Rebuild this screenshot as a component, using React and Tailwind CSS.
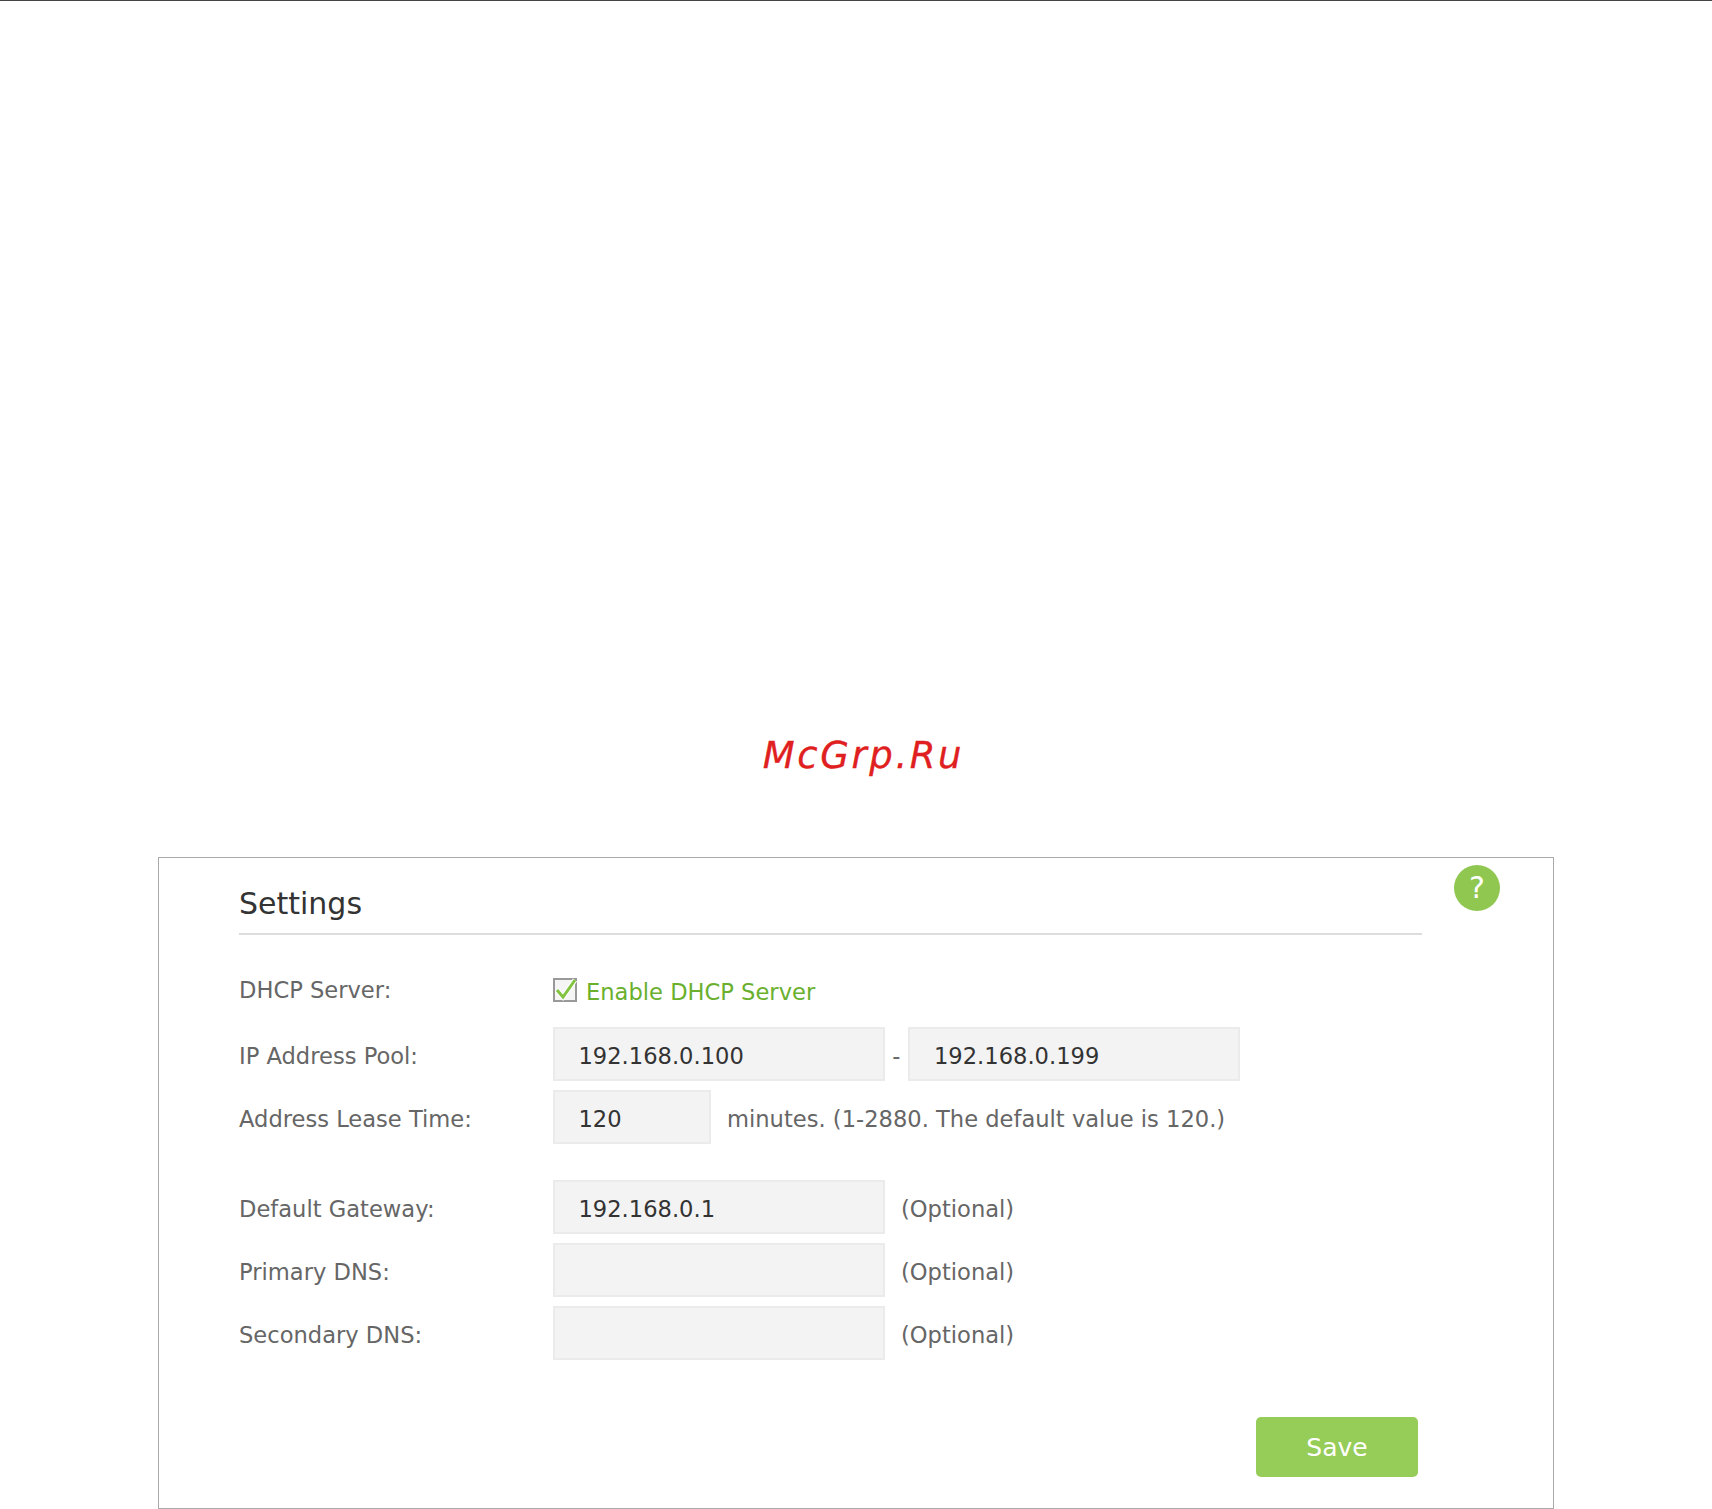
const font = { fontFamily: '"DejaVu Sans", sans-serif' };

function Field({ className = "w-[332px]", children }) {
  return (
    <div className={`${className} h-[54px] shrink-0 flex items-center pl-[24px] pt-[3px] bg-[#f3f3f3] border-2 border-[#ebebeb] text-[#333333]`}>
      {children}
    </div>
  );
}

function Row({ label, children, className = "mb-[9px]", labelClass = "pt-[3px]" }) {
  return (
    <div className={`flex items-center ${className}`}>
      <div className={`w-[313.5px] shrink-0 text-[#666666] ${labelClass}`}>{label}</div>
      {children}
    </div>
  );
}

const Hint = ({ children }) => <span className="ml-[16.5px] pt-[3px] text-[#666666]">{children}</span>;

export default function App() {
  return (
    <div style={font} className="w-[1712px] h-[1509px] bg-white overflow-hidden border-t border-[#444444]">
      <div className="h-[856px] flex justify-center pt-[733px]">
        <span className="ml-[15px] h-fit text-[37px] leading-[44px] italic tracking-[2.6px] text-[#e02020] [-webkit-text-stroke:0.3px_#e02020]">McGrp.Ru</span>
      </div>
      <div className="relative ml-[158px] w-[1396px] h-[652px] border border-[#aaaaaa] text-[22.6px] leading-[30px]">
        <div className="absolute left-[1295px] top-[7px] w-[46px] h-[46px] rounded-full bg-[#8fc750] text-white flex items-center justify-center text-[30px]">?</div>
        <div className="ml-[80px] mr-[131px] h-[77px] pt-[28px] border-b-2 border-[#dddddd] text-[30px] leading-[36px] text-[#333333]">Settings</div>
        <div className="ml-[80px] pt-[43px]">
          <Row label="DHCP Server:" className="h-[24px] mb-[25px]" labelClass="">
            <svg width="24" height="24" viewBox="0 0 24 24" className="shrink-0">
              <rect x="1" y="1" width="22" height="22" fill="#f5f5f5" stroke="#999999" strokeWidth="2" />
              <path d="M4 12l6 7L22 2" fill="none" stroke="#ffffff" strokeWidth="5" />
              <path d="M4 12l6 7L22 2" fill="none" stroke="#82c341" strokeWidth="3" />
            </svg>
            <span className="ml-[9.5px] mt-[3px] text-[#6ab02e]">Enable DHCP Server</span>
          </Row>
          <Row label="IP Address Pool:" className="mb-[9px]">
            <Field>192.168.0.100</Field>
            <span className="w-[23.5px] text-center pt-[3px] text-[#666666]">-</span>
            <Field>192.168.0.199</Field>
          </Row>
          <Row label="Address Lease Time:" className="mb-[36px]">
            <Field className="w-[158.5px]">120</Field>
            <span className="ml-[16px] pt-[3px] text-[#666666]">minutes. (1-2880. The default value is 120.)</span>
          </Row>
          <Row label="Default Gateway:">
            <Field>192.168.0.1</Field>
            <Hint>(Optional)</Hint>
          </Row>
          <Row label="Primary DNS:">
            <Field />
            <Hint>(Optional)</Hint>
          </Row>
          <Row label="Secondary DNS:" className="mb-0">
            <Field />
            <Hint>(Optional)</Hint>
          </Row>
        </div>
        <div className="flex justify-end pr-[135px] mt-[57px]">
          <button className="w-[162px] h-[60px] pt-[2px] rounded-[5px] bg-[#96cc58] text-white text-[25px]">Save</button>
        </div>
      </div>
    </div>
  );
}
